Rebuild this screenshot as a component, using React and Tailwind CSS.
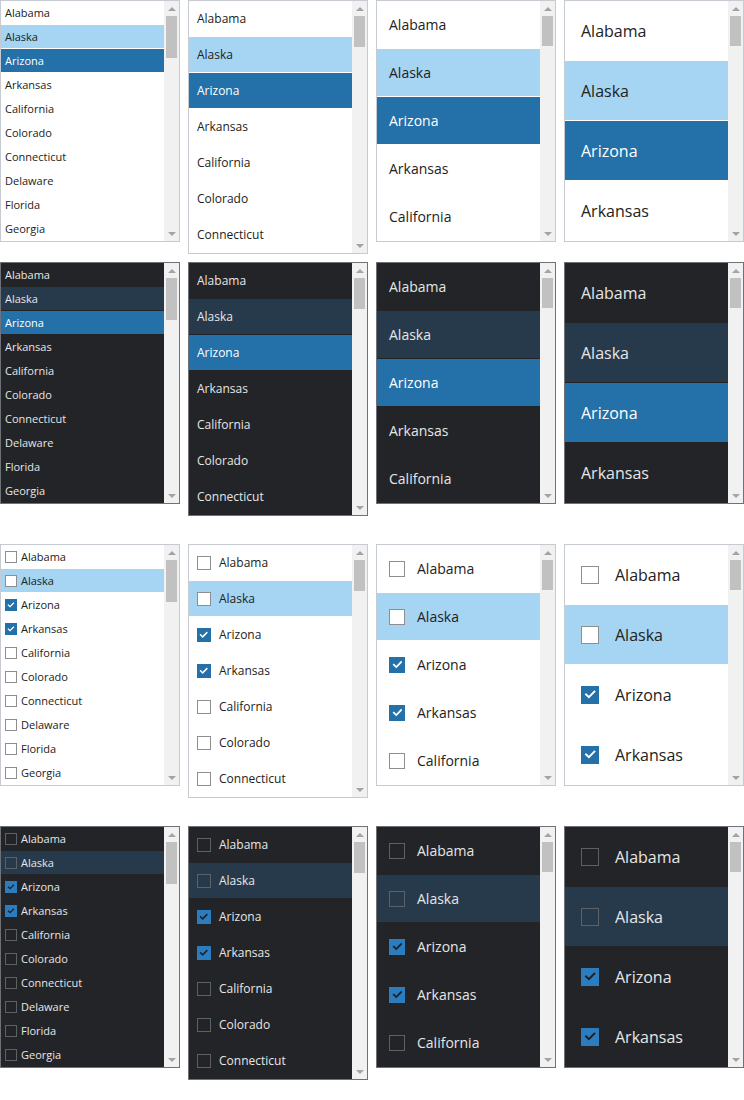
const STATES = [
  'Alabama',
  'Alaska',
  'Arizona',
  'Arkansas',
  'California',
  'Colorado',
  'Connecticut',
  'Delaware',
  'Florida',
  'Georgia',
];

// per-size metrics: row height, font size, inset, checkbox size, gap
const SIZES = {
  sm: { row: 'h-6 pt-px', text: 'text-[11px]', pad: 'pl-1', box: 'w-3 h-3', gap: 'gap-1', height: 'h-[242px]', thumb: 'h-[42px]' },
  md: { row: 'h-9', text: 'text-[12px]', pad: 'pl-2', box: 'w-3.5 h-3.5', gap: 'gap-2', height: 'h-[254px]', thumb: 'h-[31px]' },
  lg: { row: 'h-12', text: 'text-[14px]', pad: 'pl-3', box: 'w-4 h-4', gap: 'gap-3', height: 'h-[242px]', thumb: 'h-[30px]' },
  xl: { row: 'h-15', text: 'text-[16px]', pad: 'pl-4', box: 'w-[18px] h-[18px]', gap: 'gap-4', height: 'h-[242px]', thumb: 'h-[30px]' },
};

function Checkbox({ checked, dark, size }) {
  const base = `${size} shrink-0 border flex items-center justify-center`;
  if (checked) {
    return (
      <span className={`${base} ${dark ? 'bg-[#2b7dbf] border-[#2b7dbf]' : 'bg-[#2470a8] border-[#2470a8]'}`}>
        <svg viewBox="0 0 12 12" className="w-[78%] h-[78%]" fill="none">
          <polyline
            points="2,6.2 4.7,8.8 10,3.4"
            stroke={dark ? '#1e1f22' : '#ffffff'}
            strokeWidth="1.9"
            strokeLinecap="square"
          />
        </svg>
      </span>
    );
  }
  return <span className={`${base} ${dark ? 'border-[#5d6065]' : 'bg-white border-[#8e8e8e]'}`} />;
}

function Scrollbar({ thumb }) {
  return (
    <div className="w-[15px] shrink-0 bg-[#f1f1f1] flex flex-col">
      <div className="h-[15px] flex items-center justify-center">
        <span className="w-0 h-0 border-x-[4px] border-x-transparent border-b-[4px] border-b-[#a3a3a3]" />
      </div>
      <div className="flex-1 px-[2px]">
        <div className={`${thumb} bg-[#c1c1c1]`} />
      </div>
      <div className="h-[15px] flex items-center justify-center">
        <span className="w-0 h-0 border-x-[4px] border-x-transparent border-t-[4px] border-t-[#a3a3a3]" />
      </div>
    </div>
  );
}

function ListBox({ size, dark, checkable }) {
  const s = SIZES[size];
  const checked = ['Arizona', 'Arkansas'];

  return (
    <div
      className={`w-[180px] ${s.height} border flex overflow-hidden ${
        dark ? 'bg-[#232427] border-[#6e7176] text-[#e6e6e6]' : 'bg-white border-[#c6cbd1] text-[#222222]'
      }`}
    >
      <div className="flex-1 overflow-hidden">
        {STATES.map((name) => {
          const hover = name === 'Alaska';
          const selected = !checkable && name === 'Arizona';
          let tone = dark ? 'border-[#232427]' : 'border-white';
          if (hover) tone += dark ? ' bg-[#263a4c]' : ' bg-[#a6d4f3]';
          if (selected) tone += ' bg-[#2470a8] text-white';
          return (
            <div key={name} className={`${s.row} ${s.pad} ${s.text} ${s.gap} border-b flex items-center ${tone}`}>
              {checkable && <Checkbox checked={checked.includes(name)} dark={dark} size={s.box} />}
              <span className="whitespace-nowrap">{name}</span>
            </div>
          );
        })}
      </div>
      <Scrollbar thumb={s.thumb} />
    </div>
  );
}

function Row({ dark, checkable, className }) {
  return (
    <div className={`flex items-start gap-2 ${className}`}>
      {['sm', 'md', 'lg', 'xl'].map((size) => (
        <ListBox key={size} size={size} dark={dark} checkable={checkable} />
      ))}
    </div>
  );
}

export default function App() {
  return (
    <div className="w-[744px] min-h-[1100px] bg-white font-['Open_Sans',sans-serif]">
      <Row />
      <Row dark className="mt-2" />
      <Row checkable className="mt-7" />
      <Row dark checkable className="mt-7" />
    </div>
  );
}
